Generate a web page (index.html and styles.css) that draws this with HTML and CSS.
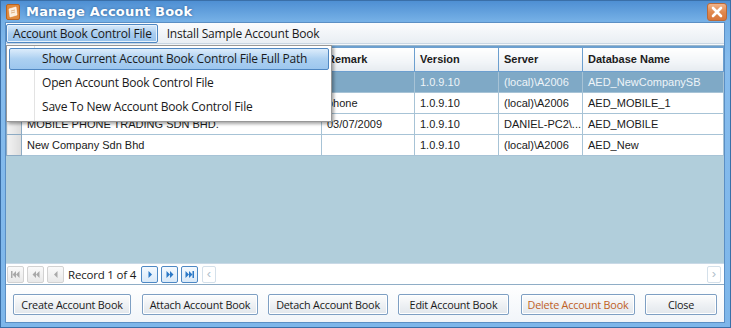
FILE: index.html
```html
<!DOCTYPE html>
<html lang="en">
<head>
  <meta charset="UTF-8">
  <title>Manage Account Book</title>
  <link rel="stylesheet" href="styles.css">
</head>
<body>
  <div class="window">
    <div class="titlebar">
      <span class="app-icon">
        <svg width="14" height="16" viewBox="0 0 14 16">
          <rect x="0.5" y="0.5" width="13" height="15" rx="1.5" fill="#e08a3c" stroke="#b8621f"/>
          <path d="M3 5 L10 3 L11 11 L4 13 Z" fill="#fbeedd" stroke="#fff" stroke-width="0.6"/>
          <path d="M5 7 L9 6 M5 9 L9 8" stroke="#d9a06a" stroke-width="0.8"/>
        </svg>
      </span>
      <span class="title">Manage Account Book</span>
      <span class="close-btn">
        <svg width="12" height="12" viewBox="0 0 12 12">
          <path d="M2 2 L10 10 M10 2 L2 10" stroke="#fff" stroke-width="2.6" stroke-linecap="round"/>
        </svg>
      </span>
    </div>

    <div class="client">
      <!-- Menu -->
      <div class="menubar">
        <span class="menu-item open">Account Book Control File</span>
        <span class="menu-item">Install Sample Account Book</span>
      </div>

      <div class="dropdown">
        <div class="dd-item active">Show Current Account Book Control File Full Path</div>
        <div class="dd-item">Open Account Book Control File</div>
        <div class="dd-item">Save To New Account Book Control File</div>
      </div>

      <!-- Grid -->
      <div class="grid-panel">
        <table class="grid">
          <thead>
            <tr>
              <th class="sel"></th>
              <th class="c-name">Company Name</th>
              <th class="c-remark">Remark</th>
              <th class="c-ver">Version</th>
              <th class="c-server">Server</th>
              <th class="c-db">Database Name</th>
            </tr>
          </thead>
          <tbody>
            <tr class="current">
              <td class="sel"></td>
              <td>New Company SB</td>
              <td></td>
              <td>1.0.9.10</td>
              <td>(local)\A2006</td>
              <td>AED_NewCompanySB</td>
            </tr>
            <tr>
              <td class="sel"></td>
              <td>MOBILE PHONE</td>
              <td>phone</td>
              <td>1.0.9.10</td>
              <td>(local)\A2006</td>
              <td>AED_MOBILE_1</td>
            </tr>
            <tr>
              <td class="sel"></td>
              <td>MOBILE PHONE TRADING SDN BHD.</td>
              <td>03/07/2009</td>
              <td>1.0.9.10</td>
              <td>DANIEL-PC2\...</td>
              <td>AED_MOBILE</td>
            </tr>
            <tr>
              <td class="sel"></td>
              <td>New Company Sdn Bhd</td>
              <td></td>
              <td>1.0.9.10</td>
              <td>(local)\A2006</td>
              <td>AED_New</td>
            </tr>
          </tbody>
        </table>
        <div class="grid-fill"></div>

        <div class="navigator">
          <span class="nav-btn off">
            <svg width="9" height="7" viewBox="0 0 9 7"><rect x="0" y="0" width="1.5" height="7" fill="currentColor"/><path d="M5 0 V7 L1.5 3.5Z M8.5 0 V7 L5 3.5Z" fill="currentColor"/></svg>
          </span>
          <span class="nav-btn off">
            <svg width="8" height="7" viewBox="0 0 8 7"><path d="M4 0 V7 L0.5 3.5Z M7.5 0 V7 L4 3.5Z" fill="currentColor"/></svg>
          </span>
          <span class="nav-btn off">
            <svg width="4" height="7" viewBox="0 0 4 7"><path d="M3.5 0 V7 L0 3.5Z" fill="currentColor"/></svg>
          </span>
          <span class="nav-text">Record 1 of 4</span>
          <span class="nav-btn on">
            <svg width="4" height="7" viewBox="0 0 4 7"><path d="M0.5 0 V7 L4 3.5Z" fill="currentColor"/></svg>
          </span>
          <span class="nav-btn on">
            <svg width="8" height="7" viewBox="0 0 8 7"><path d="M0.5 0 V7 L4 3.5Z M4 0 V7 L7.5 3.5Z" fill="currentColor"/></svg>
          </span>
          <span class="nav-btn on">
            <svg width="9" height="7" viewBox="0 0 9 7"><path d="M0.5 0 V7 L4 3.5Z M4 0 V7 L7.5 3.5Z" fill="currentColor"/><rect x="7.5" y="0" width="1.5" height="7" fill="currentColor"/></svg>
          </span>
          <div class="hscroll">
            <span class="arrow">&lsaquo;</span>
            <span class="track"></span>
            <span class="arrow">&rsaquo;</span>
          </div>
        </div>
      </div>

      <!-- Buttons -->
      <div class="actions">
        <button class="btn w-create">Create Account Book</button>
        <button class="btn w-attach">Attach Account Book</button>
        <button class="btn w-detach">Detach Account Book</button>
        <button class="btn w-edit">Edit Account Book</button>
        <button class="btn w-delete danger">Delete Account Book</button>
        <button class="btn w-close">Close</button>
      </div>
    </div>
  </div>
</body>
</html>
```

FILE: styles.css
```css
* { box-sizing: border-box; }
html, body { margin: 0; padding: 0; }
body {
  width: 731px;
  height: 328px;
  overflow: hidden;
  font-family: 'Liberation Sans', Arial, sans-serif;
  font-size: 11px;
  color: #1a1a1a;
  background: #fff;
}
.window {
  width: 731px;
  height: 328px;
  display: flex;
  flex-direction: column;
  background: linear-gradient(#4e8fd3, #75b0e6 20px, #86bced 60px, #7db6ea);
  border: 1px solid #3a6fa8;
  padding: 0 5px 4px 4px;
}
.titlebar {
  height: 21px;
  flex: none;
  display: flex;
  align-items: center;
  position: relative;
}
.app-icon { width: 14px; height: 16px; margin-left: 1px; margin-right: 6px; display: flex; }
.title {
  color: #fff;
  font-family: 'DejaVu Sans', sans-serif;
  font-weight: bold;
  font-size: 13px;
  letter-spacing: 0.2px;
  text-shadow: 0 0 3px #2d5e95;
}
.close-btn {
  position: absolute;
  right: -2px;
  top: 2px;
  width: 20px;
  height: 18px;
  border-radius: 3px;
  border: 1px solid #b96a3a;
  background: linear-gradient(#f2b48a, #e0894f 50%, #d8763a);
  display: flex;
  align-items: center;
  justify-content: center;
}
.client {
  flex: 1;
  display: flex;
  flex-direction: column;
  position: relative;
  background: #f5f8fb;
  border: 1px solid #5b8fc4;
}
.menubar {
  height: 21px;
  flex: none;
  display: flex;
  align-items: center;
  padding-left: 0;
  background: linear-gradient(#fbfcfd, #e9eef3);
  border-bottom: 1px solid #c9d6e3;
  font-family: 'Open Sans', sans-serif;
  font-size: 12px;
  letter-spacing: -0.2px;
}
.menu-item {
  height: 19px;
  line-height: 17px;
  padding: 0 5px 0 6px;
  border: 1px solid transparent;
  margin-right: 2px;
}
.menu-item.open {
  background: linear-gradient(#d9eafa, #a9cdf0 50%, #97c2ec);
  border-color: #4f87c2;
  border-radius: 2px;
  box-shadow: inset 0 0 0 1px #e7f2fc;
}
.dropdown {
  position: absolute;
  left: 0;
  top: 22px;
  width: 326px;
  padding: 2px;
  background: linear-gradient(90deg, #fff 27px, #e3e3e3 27px, #e3e3e3 28px, #fff 28px);
  border: 1px solid #979797;
  box-shadow: 2px 2px 3px rgba(0,0,0,0.35);
  font-family: 'Open Sans', sans-serif;
  font-size: 12px;
  letter-spacing: -0.2px;
  z-index: 5;
}
.dd-item {
  height: 24px;
  line-height: 22px;
  padding-left: 32px;
  border: 1px solid transparent;
}
.dd-item.active {
  height: 22px;
  line-height: 20px;
  margin-bottom: 1px;
  background: linear-gradient(#dcecfb, #acd0f1 50%, #9cc6ee);
  border-color: #4f87c2;
  border-radius: 2px;
}
.grid-panel {
  height: 240px;
  flex: none;
  margin-top: 1px;
  display: flex;
  flex-direction: column;
  background: #b1cedb;
  border-top: 1px solid #9cb7cc;
  border-bottom: 1px solid #8fadc6;
}
.grid {
  border-collapse: collapse;
  table-layout: fixed;
  width: 718px;
  background: #fff;
}
.grid th, .grid td {
  border: 1px solid #a7c3d6;
  padding: 0 5px;
  text-align: left;
  white-space: nowrap;
  overflow: hidden;
}
.grid th {
  height: 24px;
  font-weight: bold;
  font-size: 11px;
  color: #1c1c1c;
  background: linear-gradient(#ffffff, #f2f5f8 60%, #e6ebf0);
  border: 1px solid #6c9fcf;
  border-top-width: 2px;
}
.grid td { height: 21px; }
.grid .sel {
  width: 15px;
  padding: 0;
  background: linear-gradient(90deg, #f2f2f2, #dcdcdc);
  border-color: #8caac3;
}
.c-name { width: 300px; }
.c-remark { width: 93px; }
.c-ver { width: 84px; }
.c-server { width: 84px; }
.grid tr.current td {
  background: #7fa9c6;
  color: #eef4f8;
}
.grid tr.current td.sel {
  background: linear-gradient(90deg, #f2f2f2, #dcdcdc);
}
.grid-fill { flex: 1; }
.navigator {
  height: 21px;
  flex: none;
  display: flex;
  align-items: center;
  gap: 3px;
  padding: 0 3px 0 1px;
  background: #fff;
  border-top: 1px solid #c9d9e6;
}
.nav-btn {
  width: 17px;
  height: 17px;
  display: flex;
  align-items: center;
  justify-content: center;
  border-radius: 2px;
}
.nav-btn.off {
  color: #a9a9a9;
  border: 1px solid #d2d2d2;
  background: linear-gradient(#fafafa, #e9e9e9);
}
.nav-btn.on {
  color: #2b78c6;
  border: 1px solid #4d88c4;
  background: linear-gradient(#f4f9fe, #d9e9f8);
}
.nav-text {
  font-family: 'Open Sans', sans-serif;
  font-size: 11.5px;
  letter-spacing: -0.2px;
  padding: 0 2px 0 1px;
}
.hscroll {
  flex: 1;
  display: flex;
  height: 17px;
  margin-left: 1px;
}
.hscroll .arrow {
  width: 14px;
  height: 17px;
  border: 1px solid #d4e0ea;
  border-radius: 2px;
  color: #b0bfcc;
  font-size: 13px;
  line-height: 14px;
  text-align: center;
}
.hscroll .track { flex: 1; }
.actions {
  flex: 1;
  display: flex;
  align-items: center;
  padding: 1px 0 0 7px;
  background: linear-gradient(#ffffff, #f1f5f9);
}
.btn {
  height: 21px;
  padding: 0;
  font-family: 'Open Sans', sans-serif;
  font-size: 10.8px;
  letter-spacing: -0.2px;
  color: #1a1a1a;
  border: 1px solid #7e9fc3;
  border-radius: 2px;
  background: linear-gradient(#fdfdfd, #eef1f4 50%, #e2e7ec);
  box-shadow: inset 0 0 0 1px #fff;
}
.btn.danger { color: #c0601e; }
.w-create { width: 118px; margin-right: 11px; }
.w-attach { width: 116px; margin-right: 10px; }
.w-detach { width: 120px; margin-right: 10px; }
.w-edit { width: 111px; margin-right: 12px; }
.w-delete { width: 114px; margin-right: 10px; }
.w-close { width: 72px; }
```
